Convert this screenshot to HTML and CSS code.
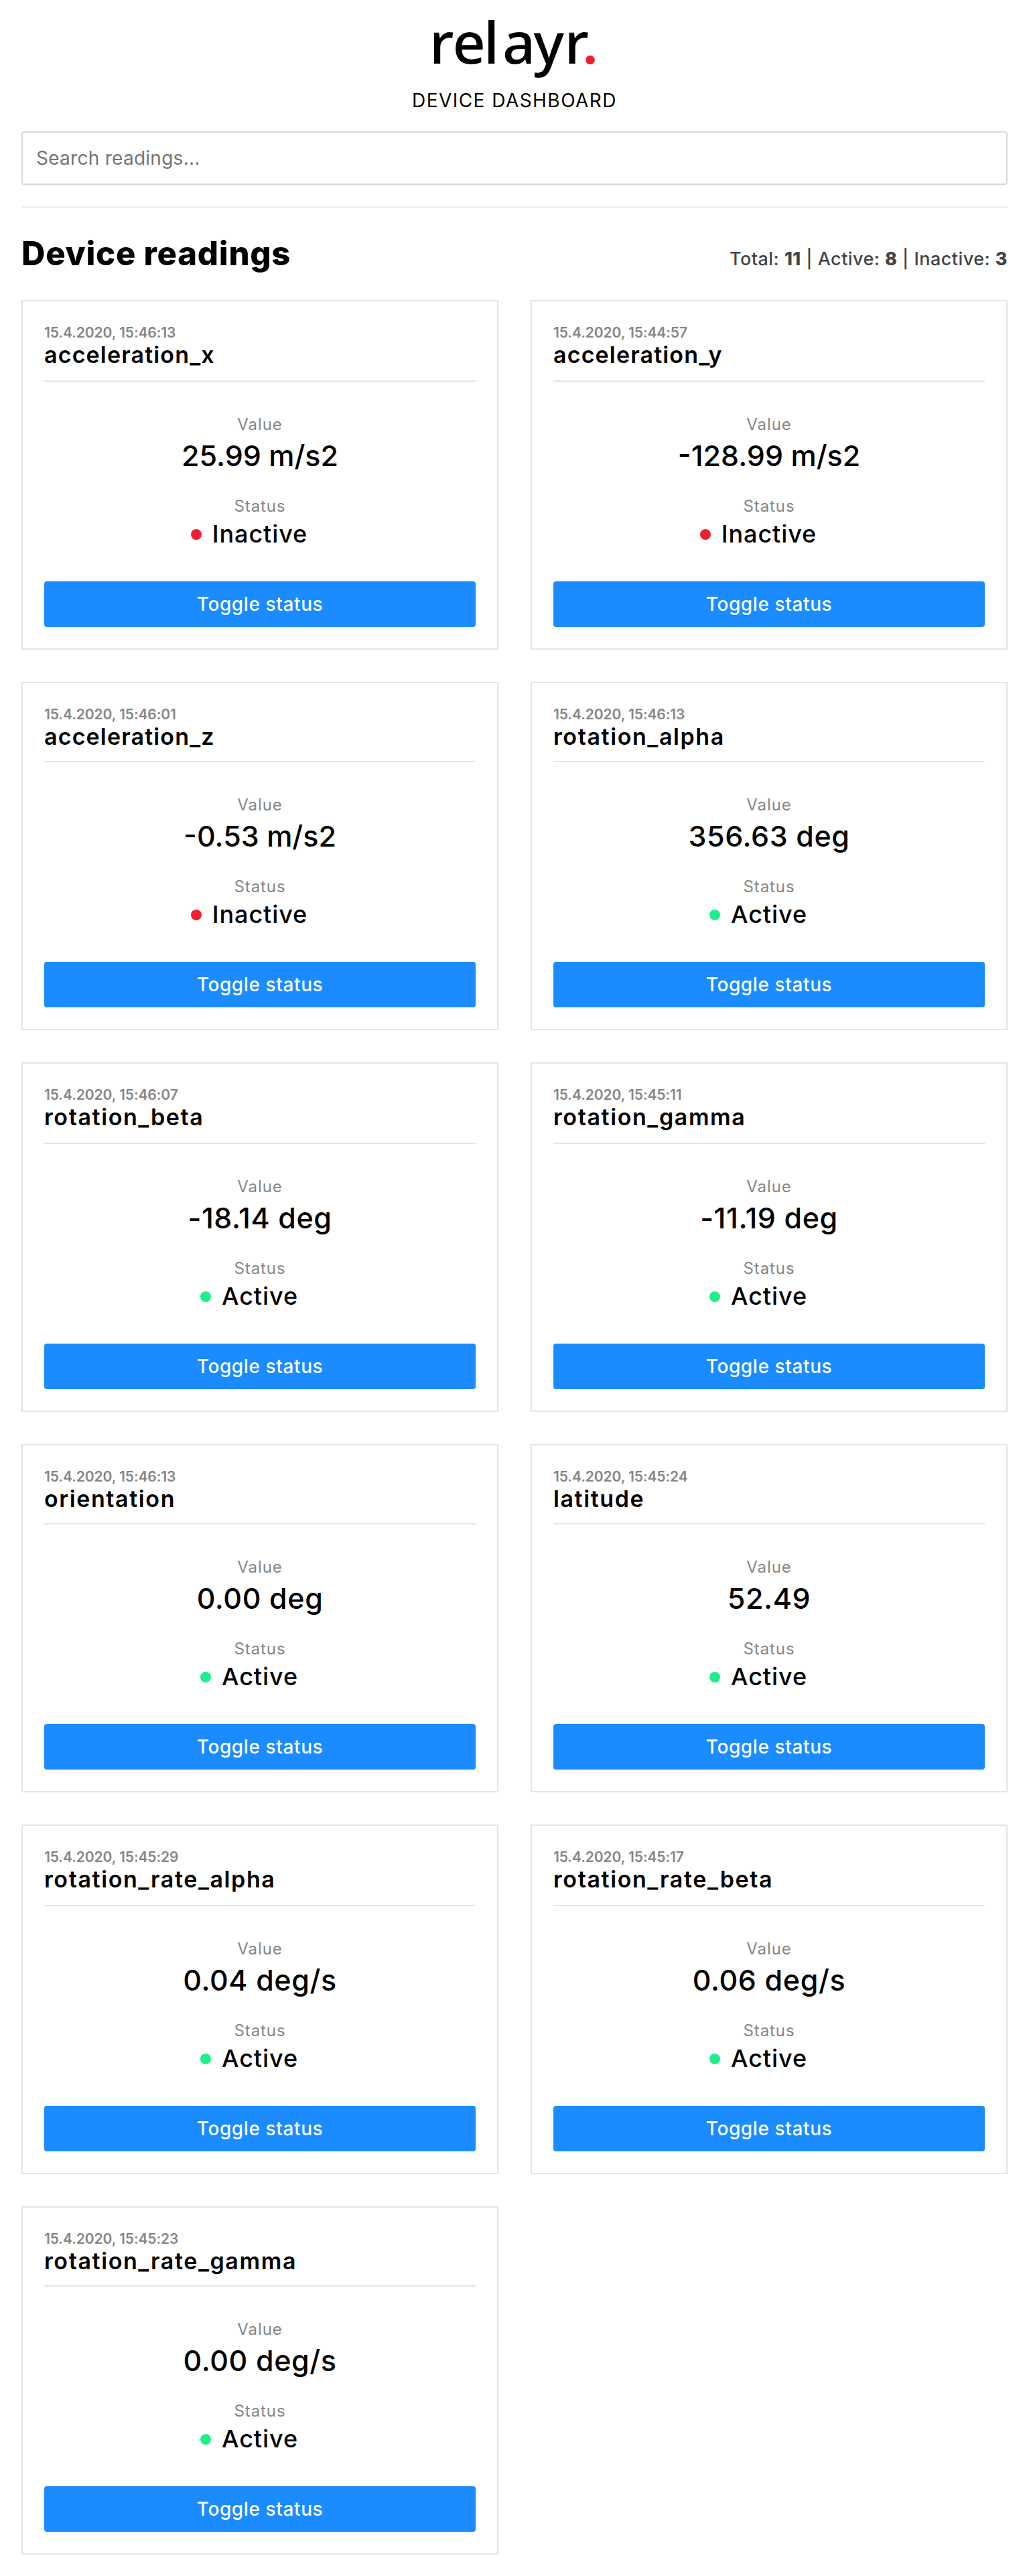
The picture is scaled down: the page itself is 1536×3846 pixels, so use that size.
FILE: index.html
```html
<!DOCTYPE html>
<html lang="en">
<head>
<meta charset="utf-8">
<title>relayr. device dashboard</title>
<link rel="stylesheet" href="styles.css">
</head>
<body>
<header class="header">
  <svg class="logo" viewBox="618 0 300 130" role="img" aria-label="relayr.">
    <text class="logo__text" y="95" x="641 675.5 722 750 796.5 842.5">relayr</text>
    <circle class="logo__dot" cx="881" cy="89.5" r="6.8"/>
  </svg>
  <p class="header__title">DEVICE DASHBOARD</p>
</header>
<main class="page">
  <input class="search" type="text" placeholder="Search readings...">
  <hr class="divider">
  <div class="toolbar">
    <h2 class="toolbar__title">Device readings</h2>
    <p class="toolbar__summary">Total: <b>11</b> | Active: <b>8</b> | Inactive: <b>3</b></p>
  </div>
  <section class="grid" id="grid"></section>
</main>
<script src="readings.js"></script>
</body>
</html>
```
FILE: styles.css
```css
* { box-sizing: border-box; }

body {
  margin: 0;
  background: #fff;
  color: #000;
  font-family: Inter, "Liberation Sans", sans-serif;
}

p, h2, h3 { margin: 0; }

.header {
  display: flex;
  flex-direction: column;
  align-items: center;
}

.logo {
  display: block;
  width: 300px;
  height: 130px;
  overflow: visible;
}

.logo__text {
  font-family: "Noto Sans", sans-serif;
  font-size: 86px;
  font-weight: 500;
}

.logo__dot { fill: #f01f30; }

.header__title {
  font-size: 28px;
  line-height: 40px;
  letter-spacing: 1.45px;
}

.page { padding: 26px 32px 32px; }

.search {
  display: block;
  width: 100%;
  height: 80px;
  padding: 0 20px;
  border: 2px solid #d9d9d9;
  border-radius: 4px;
  font-family: inherit;
  font-size: 28px;
  letter-spacing: 0.27px;
}

.search::placeholder { color: #757575; }

.divider {
  height: 2px;
  margin: 32px 0 39px;
  border: 0;
  background: #ececec;
}

.toolbar {
  display: flex;
  justify-content: space-between;
  align-items: baseline;
  height: 60px;
  margin-bottom: 39px;
}

.toolbar__title {
  font-size: 49px;
  line-height: 60px;
  font-weight: 800;
  letter-spacing: 0.75px;
}

.toolbar__summary {
  color: #444;
  font-size: 27px;
  font-weight: 500;
  letter-spacing: 0.45px;
}

.toolbar__summary b { font-weight: 800; }

.grid {
  display: grid;
  grid-template-columns: 1fr 1fr;
  gap: 48px;
}

.card {
  padding: 34px 32px 32px;
  border: 2px solid #e5e5e5;
}

.card__header {
  padding-bottom: 18px;
  border-bottom: 2px solid #e5e5e5;
}

/* every second row is slightly shorter */
.card:nth-child(4n + 3) .card__header,
.card:nth-child(4n + 4) .card__header { padding-bottom: 16px; }

.card__time {
  color: #868686;
  font-size: 21px;
  line-height: 25px;
  font-weight: 600;
  letter-spacing: -0.1px;
}

.card__name {
  margin-top: 1px;
  font-size: 34px;
  line-height: 40px;
  font-weight: 600;
  letter-spacing: 1.6px;
}

.card__name--tight { letter-spacing: 1.15px; }

.card__body {
  padding: 50px 0 49px;
  text-align: center;
}

.card__label {
  color: #868686;
  font-size: 24px;
  line-height: 28px;
  letter-spacing: 0.9px;
}

.card__value {
  margin: 6px 0 36px;
  font-size: 43px;
  line-height: 52px;
  font-weight: 500;
  letter-spacing: 0.6px;
}

.card__value--tight { letter-spacing: 0; }

.card__status {
  display: flex;
  justify-content: center;
  align-items: center;
  gap: 16px;
  margin-top: 5px;
  padding-right: 32px;
  font-size: 36px;
  line-height: 44px;
  font-weight: 500;
  letter-spacing: 0.9px;
}

.card__dot {
  width: 16px;
  height: 16px;
  margin-top: 2px;
  border-radius: 50%;
  background: #1fef8b;
}

.card__dot--inactive { background: #f01f30; }

.card__button {
  display: block;
  width: 100%;
  height: 68px;
  padding: 0;
  border: 0;
  border-radius: 4px;
  background: #1a8cff;
  color: #fff;
  font-family: inherit;
  font-size: 28px;
  font-weight: 500;
  letter-spacing: 0.6px;
}
```
FILE: readings.js
```js
const readings = [
  ['15:46:13', 'acceleration_x', '25.99 m/s2', false],
  ['15:44:57', 'acceleration_y', '-128.99 m/s2', false],
  ['15:46:01', 'acceleration_z', '-0.53 m/s2', false],
  ['15:46:13', 'rotation_alpha', '356.63 deg', true],
  ['15:46:07', 'rotation_beta', '-18.14 deg', true],
  ['15:45:11', 'rotation_gamma', '-11.19 deg', true],
  ['15:46:13', 'orientation', '0.00 deg', true],
  ['15:45:24', 'latitude', '52.49', true],
  ['15:45:29', 'rotation_rate_alpha', '0.04 deg/s', true],
  ['15:45:17', 'rotation_rate_beta', '0.06 deg/s', true],
  ['15:45:23', 'rotation_rate_gamma', '0.00 deg/s', true],
];

document.getElementById('grid').innerHTML = readings.map(([time, name, value, active]) => {
  const tight = name.startsWith('acceleration');
  return `
  <article class="card">
    <div class="card__header">
      <p class="card__time">15.4.2020, ${time}</p>
      <h3 class="card__name${tight ? ' card__name--tight' : ''}">${name}</h3>
    </div>
    <div class="card__body">
      <p class="card__label">Value</p>
      <p class="card__value${tight ? ' card__value--tight' : ''}">${value}</p>
      <p class="card__label">Status</p>
      <p class="card__status"><span class="card__dot${active ? '' : ' card__dot--inactive'}"></span>${active ? 'Active' : 'Inactive'}</p>
    </div>
    <button class="card__button" type="button">Toggle status</button>
  </article>`;
}).join('');
```
